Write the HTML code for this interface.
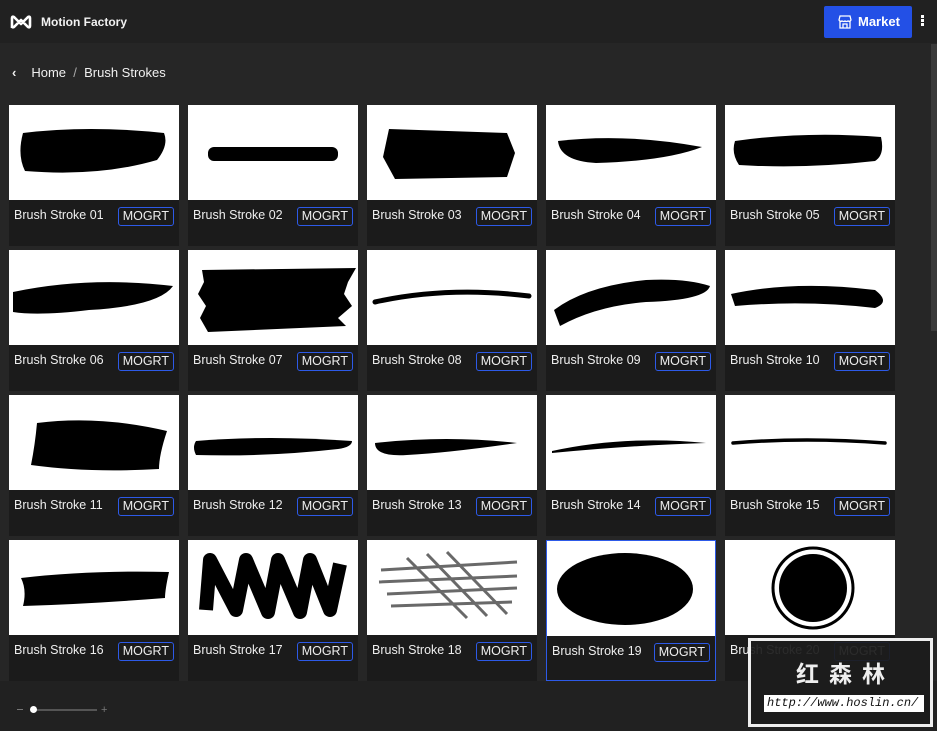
<!DOCTYPE html>
<html><head><meta charset="utf-8"><style>
*{margin:0;padding:0;box-sizing:border-box}
body{width:937px;height:731px;overflow:hidden;background:#262626;font-family:"Liberation Sans",sans-serif;color:#eee;position:relative}
.hdr{position:absolute;left:0;top:0;width:937px;height:43px;background:#212121}
.logo{position:absolute;left:10px;top:14px}
.brand{position:absolute;left:41px;top:15px;font-size:12px;font-weight:bold;color:#f2f2f2}
.mkt{position:absolute;left:824px;top:6px;width:88px;height:32px;background:#2350e6;border-radius:2px;color:#fff;font-size:13px;font-weight:bold;padding:8px 0 0 34px}
.dots{position:absolute;left:921px;top:15px;width:3px}
.dots i{display:block;width:3px;height:3px;background:#fff;margin-bottom:1px}
.bc{position:absolute;left:12px;top:65px;font-size:13px;color:#f0f0f0}
.card{position:absolute;width:170px;height:141px;background:#1b1b1b}
.card svg{display:block;background:#fff}
.t{position:absolute;left:5px;top:103px;font-size:12.5px;color:#eee}
.m{position:absolute;right:5px;top:102px;height:19px;padding:0 4px;border:1px solid #2d5ae8;border-radius:3px;font-size:12.5px;line-height:17px;color:#eee}
.bot{position:absolute;left:0;top:681px;width:937px;height:50px;background:#212121}
.sb{position:absolute;left:931px;top:44px;width:6px;height:287px;background:#3a3a3a}
.wm{position:absolute;left:748px;top:638px;width:185px;height:89px;border:3px solid #eee;background:rgba(28,28,28,.93)}
</style></head><body>
<div class="hdr">
<svg class="logo" width="22" height="16" viewBox="0 0 22 16"><path d="M2 14V4Q2 2 4 3L11 10L18 3Q20 2 20 4V12Q20 14 18 13L11 6L4 13Q2 14 2 12" fill="none" stroke="#fff" stroke-width="2.6" stroke-linejoin="round"/></svg>
<div class="brand">Motion Factory</div>
<div class="mkt"><svg style="position:absolute;left:14px;top:9px" width="14" height="14" viewBox="0 0 14 14"><path d="M2 1H12L13 5Q12 7 10 6Q8 7 7 6Q6 7 4 6Q2 7 1 5ZM2 6V13H12V6M5 13V9H9V13" fill="none" stroke="#fff" stroke-width="1.3"/></svg>Market</div>
<div class="dots"><i></i><i></i><i></i></div>
</div>
<div class="bc"><span style="font-weight:bold;margin-right:15px">&#8249;</span>Home &nbsp;<span style="color:#aaa">/</span>&nbsp; Brush Strokes</div>
<div class="sb"></div>

<div class="card" style="left:9px;top:105px"><svg width="170" height="95"><path d="M14 28Q80 20 155 28Q160 40 148 55Q90 72 16 66Q8 50 14 28Z"/></svg><div class="t">Brush Stroke 01</div><div class="m">MOGRT</div></div>
<div class="card" style="left:188px;top:105px"><svg width="170" height="95"><rect x="20" y="42" width="130" height="14" rx="6"/></svg><div class="t">Brush Stroke 02</div><div class="m">MOGRT</div></div>
<div class="card" style="left:367px;top:105px"><svg width="170" height="95"><path d="M22 24L140 28L148 48L140 72L28 74L16 52Z"/></svg><div class="t">Brush Stroke 03</div><div class="m">MOGRT</div></div>
<div class="card" style="left:546px;top:105px"><svg width="170" height="95"><path d="M12 36Q80 28 156 42Q120 56 50 58Q14 56 12 36Z"/></svg><div class="t">Brush Stroke 04</div><div class="m">MOGRT</div></div>
<div class="card" style="left:725px;top:105px"><svg width="170" height="95"><path d="M10 36Q80 26 156 32Q160 50 150 56Q80 64 14 60Q6 48 10 36Z"/></svg><div class="t">Brush Stroke 05</div><div class="m">MOGRT</div></div>

<div class="card" style="left:9px;top:250px"><svg width="170" height="95"><path d="M4 42Q80 26 164 36Q150 56 80 60Q30 66 4 62Z"/></svg><div class="t">Brush Stroke 06</div><div class="m">MOGRT</div></div>
<div class="card" style="left:188px;top:250px"><svg width="170" height="95"><path d="M14 20L168 18L160 32L156 44L164 56L150 68L158 76L20 82L12 68L18 56L10 44L16 32Z"/></svg><div class="t">Brush Stroke 07</div><div class="m">MOGRT</div></div>
<div class="card" style="left:367px;top:250px"><svg width="170" height="95"><path d="M8 52Q80 36 162 46" fill="none" stroke="#000" stroke-width="5" stroke-linecap="round"/></svg><div class="t">Brush Stroke 08</div><div class="m">MOGRT</div></div>
<div class="card" style="left:546px;top:250px"><svg width="170" height="95"><path d="M8 60Q40 36 100 30Q140 28 164 36Q160 50 100 52Q50 56 14 76Z"/></svg><div class="t">Brush Stroke 09</div><div class="m">MOGRT</div></div>
<div class="card" style="left:725px;top:250px"><svg width="170" height="95"><path d="M6 44Q70 30 150 40Q166 52 150 58Q80 50 10 56Z"/></svg><div class="t">Brush Stroke 10</div><div class="m">MOGRT</div></div>

<div class="card" style="left:9px;top:395px"><svg width="170" height="95"><path d="M28 28Q90 20 158 36Q150 60 150 74Q80 78 22 70Q26 50 28 28Z"/></svg><div class="t">Brush Stroke 11</div><div class="m">MOGRT</div></div>
<div class="card" style="left:188px;top:395px"><svg width="170" height="95"><path d="M8 46Q80 40 164 46Q164 52 150 54Q80 62 8 60Q4 52 8 46Z"/></svg><div class="t">Brush Stroke 12</div><div class="m">MOGRT</div></div>
<div class="card" style="left:367px;top:395px"><svg width="170" height="95"><path d="M8 48Q80 40 150 48Q80 58 40 60Q8 62 8 48Z"/></svg><div class="t">Brush Stroke 13</div><div class="m">MOGRT</div></div>
<div class="card" style="left:546px;top:395px"><svg width="170" height="95"><path d="M6 56Q80 40 160 48Q90 50 6 58Z"/></svg><div class="t">Brush Stroke 14</div><div class="m">MOGRT</div></div>
<div class="card" style="left:725px;top:395px"><svg width="170" height="95"><path d="M8 48Q80 42 160 48" fill="none" stroke="#000" stroke-width="3.5" stroke-linecap="round"/></svg><div class="t">Brush Stroke 15</div><div class="m">MOGRT</div></div>

<div class="card" style="left:9px;top:540px"><svg width="170" height="95"><path d="M12 38Q80 30 160 32Q156 50 156 58Q80 64 14 66Q18 50 12 38Z"/></svg><div class="t">Brush Stroke 16</div><div class="m">MOGRT</div></div>
<div class="card" style="left:188px;top:540px"><svg width="170" height="95"><path d="M18 70L22 20L48 70L58 20L80 72L90 20L112 72L122 20L142 70L152 24" fill="none" stroke="#000" stroke-width="14" stroke-linejoin="round"/></svg><div class="t">Brush Stroke 17</div><div class="m">MOGRT</div></div>
<div class="card" style="left:367px;top:540px"><svg width="170" height="95"><g stroke="#444" stroke-width="3" opacity=".8"><path d="M14 30L150 22M12 42L150 36M20 54L150 48M24 66L145 62M60 14L120 76M80 12L140 74M40 18L100 78"/></g></svg><div class="t">Brush Stroke 18</div><div class="m">MOGRT</div></div>
<div class="card" style="left:546px;top:540px;border:1px solid #2d5ae8"><svg width="168" height="95"><ellipse cx="78" cy="48" rx="68" ry="36"/></svg><div class="t">Brush Stroke 19</div><div class="m">MOGRT</div></div>
<div class="card" style="left:725px;top:540px"><svg width="170" height="95"><circle cx="88" cy="48" r="34"/><circle cx="88" cy="48" r="40" fill="none" stroke="#000" stroke-width="3"/></svg><div class="t">Brush Stroke 20</div><div class="m">MOGRT</div></div>

<div class="bot">
<div style="position:absolute;left:17px;top:28px;width:6px;height:1px;background:#777"></div>
<div style="position:absolute;left:33px;top:28px;width:64px;height:2px;background:#555"></div>
<div style="position:absolute;left:30px;top:25px;width:7px;height:7px;border-radius:50%;background:#fff"></div>
<div style="position:absolute;left:101px;top:26px;color:#777;font-size:11px;line-height:7px">+</div>
</div>
<div class="wm">
<div style="position:absolute;left:45px;top:14px;font-size:23px;font-weight:bold;color:#eee;letter-spacing:10px;font-family:'Noto Sans CJK SC',sans-serif">红森林</div>
<div style="position:absolute;left:13px;top:54px;width:160px;height:17px;background:#fff;color:#111;font-family:'Liberation Mono',monospace;font-style:italic;font-size:12px;line-height:17px;padding-left:3px">http://www.hoslin.cn/</div>
</div>
</body></html>
